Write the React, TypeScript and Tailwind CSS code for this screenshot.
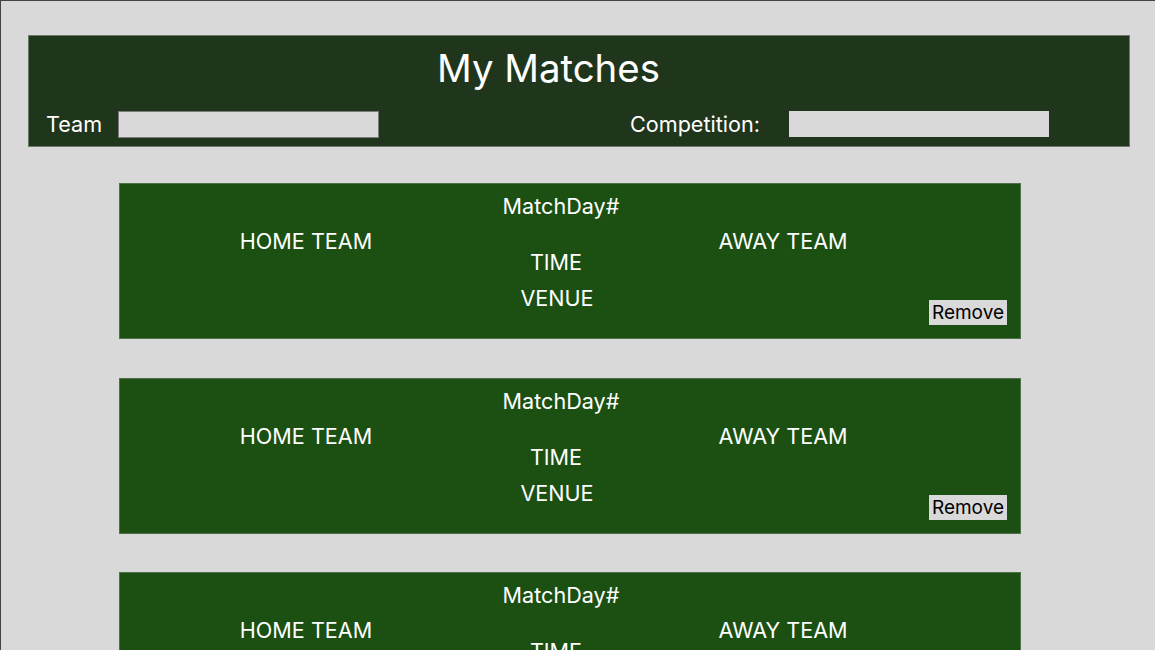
const matches = [1, 2, 3];

function MatchCard() {
  return (
    <div className="ml-[118px] w-[902px] h-[156px] bg-[#1b5012] border border-[#4f7149] flex text-white text-[21.6px] leading-6">
      <div className="w-[372px] pt-[45px] text-center">HOME TEAM</div>
      <div className="w-[138px] flex flex-col items-center">
        <div className="mt-[10px]">MatchDay#</div>
        <div className="mt-[32px] ml-[-10px]">TIME</div>
        <div className="mt-[12px] ml-[-8px]">VENUE</div>
      </div>
      <div className="flex-1 flex flex-col">
        <div className="w-[306px] pt-[45px] text-center">AWAY TEAM</div>
        <div className="flex justify-end pr-[13px] mt-[47px]">
          <button className="w-[78px] h-[25px] bg-[#d9d9d9] text-black text-[19px] leading-[25px] text-center">
            Remove
          </button>
        </div>
      </div>
    </div>
  );
}

export default function App() {
  return (
    <div className="min-h-screen bg-[#d9d9d9] border-t border-l border-[#444] pt-[34px] pb-10" style={{ fontFamily: 'Inter, "Noto Sans", sans-serif' }}>
      <header className="ml-[27px] mr-[25px] h-[112px] bg-[#20361c] border border-[#6a7a66] text-white">
        <h1 className="text-center pr-[61px] text-[38.4px] leading-[44px] pt-[10px]">My Matches</h1>
        <div className="flex items-center mt-[18px]">
          <div className="w-[445px] flex items-center">
            <span className="ml-[17px] text-[21.6px]">Team</span>
            <div className="ml-[16px] w-[261px] h-[27px] bg-[#d9d9d9] border border-[#7b7b7b]" />
          </div>
          <div className="ml-[156px] flex items-center">
            <span className="text-[21.6px]">Competition:</span>
            <div className="ml-[29px] w-[260px] h-[26px] bg-[#d9d9d9]" />
          </div>
        </div>
      </header>
      <div className="mt-[36px] flex flex-col gap-[38.5px]">
        {matches.map((m) => (
          <MatchCard key={m} />
        ))}
      </div>
    </div>
  );
}
